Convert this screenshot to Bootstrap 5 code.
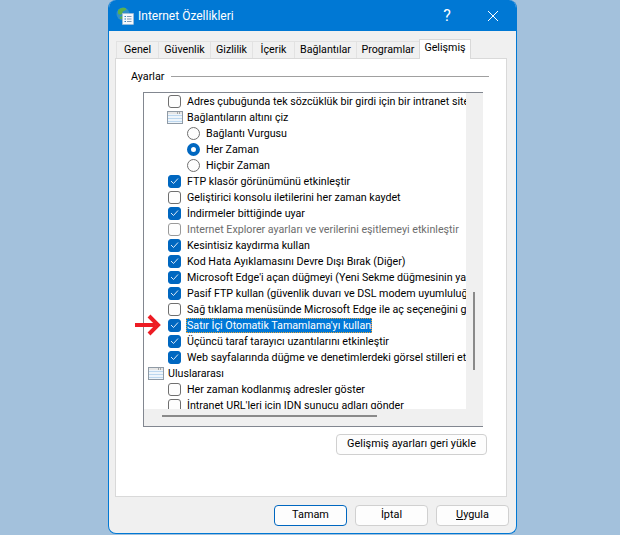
<!DOCTYPE html>
<html lang="tr">
<head>
<meta charset="utf-8">
<title>Internet Özellikleri</title>
<link href="https://cdn.jsdelivr.net/npm/bootstrap@5.3.0/dist/css/bootstrap.min.css" rel="stylesheet">
<style>
html,body{height:535px;overflow:hidden}
body{background:#a3c1dc;font-family:Roboto,"Noto Sans",sans-serif;font-size:11px;color:#000}
.dlg{position:relative;width:409px;height:534px;margin-left:108px;border:1px solid #0078d4;border-top:0;border-radius:8px;background:#f0f0f0;overflow:hidden}
.dlg-title{height:31px;background:#0078d4;color:#fff;font-size:12px;padding-left:7px}
.dlg-title .ttl{margin-left:4px}
.win-ctl{width:46px;height:31px}
.tabrow{height:27px;padding:7px 0 0 7px;align-items:flex-end}
.wtab{height:17px;background:#f0f0f0;border:1px solid #e2e2e2;border-bottom:0;margin-right:-1px;display:flex;align-items:center;justify-content:center;font-size:10.7px}
.wtab.on{height:20px;background:#fff;border-color:#d9d9d9;padding-bottom:3px;position:relative;z-index:1;margin-bottom:-1px}
.tpanel{margin:0 9px 0 6px;height:439px;background:#fff;border:1px solid #d9d9d9;padding:0 17px 0 15px}
.grp-h{height:33px;gap:6px;padding-top:3px;font-size:10.8px}
.grp-h hr{flex:1;margin:0 0 2px 0;border-top:1px solid #a0a0a0;opacity:1}
.lst{margin:0 5px 0 12px;height:335px;width:340px;border:1px solid #828790;display:grid;grid-template-columns:322px 17px;grid-template-rows:316px 17px;background:#f0f0f0}
.lst-main{background:#fff;overflow:hidden;white-space:nowrap;padding-top:1px}
.rw{height:16px;display:flex;align-items:center;line-height:16px;font-size:10.7px}
.ck,.rd{width:13px;height:13px;flex:none;border:1px solid #6f6f6f;background:#fdfdfd;margin-top:-2px;margin-right:6px;display:flex;align-items:center;justify-content:center}
.ck{border-radius:3px;margin-left:24px}
.ck.on{background:#0067c0;border-color:#0067c0}
.ck.on svg path{stroke:#dbe9f7}
.rd{border-radius:50%;margin-left:43px}
.rd.on{border:4px solid #0067c0;background:#fff}
.fic{flex:none;margin:-2px 4px 0 23px}
.fic0{margin-left:4px}
.sel{background:#0078d7;color:#fff;outline:1px dotted #e8a33a;outline-offset:-1px;padding:0 1px;margin-left:-1px;margin-top:-1px;height:15px;line-height:16px}
.dim{color:#6d6d6d}
.dim .ck{border-color:#9a9a9a}
.sb-v{position:relative;background:#f0f0f0}
.sb-v i{position:absolute;left:7px;top:199px;width:2px;height:78px;background:#8a8a8a}
.sb-h{position:relative;background:#f0f0f0;grid-column:1 / 3}
.sb-h i{position:absolute;left:18px;top:6px;width:215px;height:2px;background:#8a8a8a}
.wbtn{height:21px;font-size:10.9px;line-height:1;padding:0;border:1px solid #d0d0d0;border-radius:4px;background:#fdfdfd;color:#000}
.wbtn:hover{background:#fdfdfd;border-color:#d0d0d0;color:#000}
.wbtn.def{border:1.5px solid #0067c0}
.reset{width:151px;margin:7px 0 0 205px;display:block}
.foot{margin-top:8px;padding-left:165px;gap:8px}
.foot .wbtn{width:73px}
.arrow{position:absolute;left:26px;top:314px}
</style>
</head>
<body>
<div class="dlg">
  <div class="dlg-title d-flex align-items-center">
    <svg width="18" height="18" viewBox="0 0 18 18"><circle cx="7" cy="7" r="6.500" fill="#2f8fc9"/><path d="M2 3.500C4 0 9 0 10.500 2 9.500 4.500 7 3 6.500 5.500S3.500 8.500 2 6.500z" fill="#5bb04a"/><path d="M3.500 11c1-2 3-2 4-1l-1 2.500z" fill="#5bb04a"/><rect x="6.500" y="6.500" width="11" height="11" fill="#f5f8fb" stroke="#a9bdd0" stroke-width=".6"/><path d="M8.500 9.500h1.500M8.500 12h1.500M8.500 14.500h1.500" stroke="#2c7fbf"/><path d="M11 9.500h4.500M11 12h4.500M11 14.500h4.500" stroke="#7f9ab5"/></svg>
    <span class="ttl">Internet Özellikleri</span>
    <span class="flex-grow-1"></span>
    <span class="win-ctl d-flex align-items-center justify-content-center fs-6">?</span>
    <span class="win-ctl d-flex align-items-center justify-content-center"><svg width="12" height="12" viewBox="0 0 12 12"><path d="M1 1l10 10M11 1L1 11" stroke="#fff" stroke-width="1"/></svg></span>
  </div>
  <div class="tabrow d-flex">
    <div class="wtab" style="width:43px">Genel</div>
    <div class="wtab" style="width:53px">Güvenlik</div>
    <div class="wtab" style="width:43px">Gizlilik</div>
    <div class="wtab" style="width:43px">İçerik</div>
    <div class="wtab" style="width:63px">Bağlantılar</div>
    <div class="wtab" style="width:64px">Programlar</div>
    <div class="wtab on" style="width:52px">Gelişmiş</div>
  </div>
  <div class="tpanel">
    <div class="grp-h d-flex align-items-center"><span>Ayarlar</span><hr></div>
    <div class="lst">
      <div class="lst-main">
        <div class="rw"><span class="ck"></span>Adres çubuğunda tek sözcüklük bir girdi için bir intranet sitesi</div>
        <div class="rw"><svg class="fic" width="16" height="13" viewBox="0 0 16 13"><rect x=".5" y=".5" width="15" height="12" fill="#fff" stroke="#8f9aa5"/><path d="M1 1h14v2H1z" fill="#e6e6e6"/><path d="M10 2h1M12 2h1" stroke="#666"/><path d="M1 4.500h14M1 7.500h14M1 10.500h14" stroke="#bcd7ef" stroke-width="1.400"/></svg>Bağlantıların altını çiz</div>
        <div class="rw"><span class="rd"></span>Bağlantı Vurgusu</div>
        <div class="rw"><span class="rd on"></span>Her Zaman</div>
        <div class="rw"><span class="rd"></span>Hiçbir Zaman</div>
        <div class="rw"><span class="ck on"><svg width="9" height="8" viewBox="0 0 9 8"><path d="M1 4l2.500 2.500L8 1.500" fill="none" stroke="#fff"/></svg></span>FTP klasör görünümünü etkinleştir</div>
        <div class="rw"><span class="ck"></span>Geliştirici konsolu iletilerini her zaman kaydet</div>
        <div class="rw"><span class="ck on"><svg width="9" height="8" viewBox="0 0 9 8"><path d="M1 4l2.500 2.500L8 1.500" fill="none" stroke="#fff"/></svg></span>İndirmeler bittiğinde uyar</div>
        <div class="rw dim"><span class="ck"></span>Internet Explorer ayarları ve verilerini eşitlemeyi etkinleştir</div>
        <div class="rw"><span class="ck on"><svg width="9" height="8" viewBox="0 0 9 8"><path d="M1 4l2.500 2.500L8 1.500" fill="none" stroke="#fff"/></svg></span>Kesintisiz kaydırma kullan</div>
        <div class="rw"><span class="ck on"><svg width="9" height="8" viewBox="0 0 9 8"><path d="M1 4l2.500 2.500L8 1.500" fill="none" stroke="#fff"/></svg></span>Kod Hata Ayıklamasını Devre Dışı Bırak (Diğer)</div>
        <div class="rw"><span class="ck on"><svg width="9" height="8" viewBox="0 0 9 8"><path d="M1 4l2.500 2.500L8 1.500" fill="none" stroke="#fff"/></svg></span>Microsoft Edge'i açan düğmeyi (Yeni Sekme düğmesinin yanında)</div>
        <div class="rw"><span class="ck on"><svg width="9" height="8" viewBox="0 0 9 8"><path d="M1 4l2.500 2.500L8 1.500" fill="none" stroke="#fff"/></svg></span>Pasif FTP kullan (güvenlik duvarı ve DSL modem uyumluluğu için)</div>
        <div class="rw"><span class="ck"></span>Sağ tıklama menüsünde Microsoft Edge ile aç seçeneğini gizle</div>
        <div class="rw"><span class="ck on"><svg width="9" height="8" viewBox="0 0 9 8"><path d="M1 4l2.500 2.500L8 1.500" fill="none" stroke="#fff"/></svg></span><span class="sel">Satır İçi Otomatik Tamamlama'yı kullan</span></div>
        <div class="rw"><span class="ck on"><svg width="9" height="8" viewBox="0 0 9 8"><path d="M1 4l2.500 2.500L8 1.500" fill="none" stroke="#fff"/></svg></span>Üçüncü taraf tarayıcı uzantılarını etkinleştir</div>
        <div class="rw"><span class="ck on"><svg width="9" height="8" viewBox="0 0 9 8"><path d="M1 4l2.500 2.500L8 1.500" fill="none" stroke="#fff"/></svg></span>Web sayfalarında düğme ve denetimlerdeki görsel stilleri etkinleştir</div>
        <div class="rw"><svg class="fic fic0" width="16" height="13" viewBox="0 0 16 13"><rect x=".5" y=".5" width="15" height="12" fill="#fff" stroke="#8f9aa5"/><path d="M1 1h14v2H1z" fill="#e6e6e6"/><path d="M10 2h1M12 2h1" stroke="#666"/><path d="M1 4.500h14M1 7.500h14M1 10.500h14" stroke="#bcd7ef" stroke-width="1.400"/></svg>Uluslararası</div>
        <div class="rw"><span class="ck"></span>Her zaman kodlanmış adresler göster</div>
        <div class="rw"><span class="ck"></span>İntranet URL'leri için IDN sunucu adları gönder</div>
      </div>
      <div class="sb-v"><i></i></div>
      <div class="sb-h"><i></i></div>
    </div>
    <button type="button" class="btn wbtn reset">Gelişmiş ayarları <u>g</u>eri yükle</button>
  </div>
  <div class="foot d-flex">
    <button type="button" class="btn wbtn def">Tamam</button>
    <button type="button" class="btn wbtn">İptal</button>
    <button type="button" class="btn wbtn"><u>U</u>ygula</button>
  </div>
  <svg class="arrow" width="28" height="22" viewBox="0 0 28 22"><path d="M0 9h20v4H0z" fill="#ed1c24"/><path d="M14 2l9 9-9 9" fill="none" stroke="#ed1c24" stroke-width="4"/></svg>
</div>
<script src="https://cdn.jsdelivr.net/npm/bootstrap@5.3.0/dist/js/bootstrap.bundle.min.js"></script>
</body>
</html>
